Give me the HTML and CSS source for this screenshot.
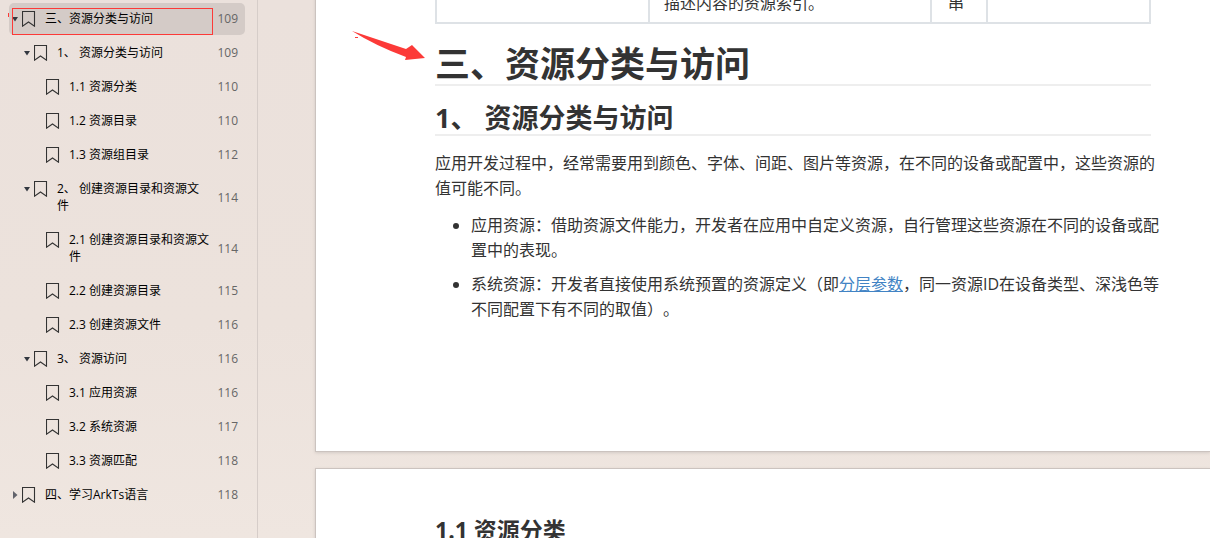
FILE: index.html
```html
<!DOCTYPE html>
<html lang="zh-CN">
<head>
  <meta charset="utf-8">
  <title>资源分类与访问</title>
  <link rel="stylesheet" href="styles.css">
</head>
<body>
  <svg class="symbols" aria-hidden="true">
    <symbol id="bookmark" viewBox="0 0 14 16"><path d="M.5 .5H12.5V15.2L6.5 11L.5 15.2Z" fill="none" stroke="#333" stroke-width="1.1"/></symbol>
    <symbol id="down" viewBox="0 0 6 6"><path d="M0 1H6L3 5.5Z" fill="#333840"/></symbol>
    <symbol id="right" viewBox="0 0 6 8"><path d="M1 0L5.5 4L1 8Z" fill="#62636b"/></symbol>
  </svg>

  <div class="wrapper">
    <nav class="sidebar">
      <ul class="outline">
        <li class="row active"><button class="toggle" aria-label="收起"><svg width="6" height="6"><use href="#down"/></svg></button><svg class="mark"><use href="#bookmark"/></svg><a href="#c3">三、资源分类与访问</a><span class="num">109</span></li>
        <li class="row level-1"><button class="toggle" aria-label="收起"><svg width="6" height="6"><use href="#down"/></svg></button><svg class="mark"><use href="#bookmark"/></svg><a href="#c3-1">1、 资源分类与访问</a><span class="num">109</span></li>
        <li class="row level-2"><svg class="mark"><use href="#bookmark"/></svg><a href="#c3-1-1">1.1 资源分类</a><span class="num">110</span></li>
        <li class="row level-2"><svg class="mark"><use href="#bookmark"/></svg><a href="#">1.2 资源目录</a><span class="num">110</span></li>
        <li class="row level-2"><svg class="mark"><use href="#bookmark"/></svg><a href="#">1.3 资源组目录</a><span class="num">112</span></li>
        <li class="row level-1"><button class="toggle" aria-label="收起"><svg width="6" height="6"><use href="#down"/></svg></button><svg class="mark"><use href="#bookmark"/></svg><a href="#">2、 创建资源目录和资源文件</a><span class="num">114</span></li>
        <li class="row level-2"><svg class="mark"><use href="#bookmark"/></svg><a href="#">2.1 创建资源目录和资源文件</a><span class="num">114</span></li>
        <li class="row level-2"><svg class="mark"><use href="#bookmark"/></svg><a href="#">2.2 创建资源目录</a><span class="num">115</span></li>
        <li class="row level-2"><svg class="mark"><use href="#bookmark"/></svg><a href="#">2.3 创建资源文件</a><span class="num">116</span></li>
        <li class="row level-1"><button class="toggle" aria-label="收起"><svg width="6" height="6"><use href="#down"/></svg></button><svg class="mark"><use href="#bookmark"/></svg><a href="#">3、 资源访问</a><span class="num">116</span></li>
        <li class="row level-2"><svg class="mark"><use href="#bookmark"/></svg><a href="#">3.1 应用资源</a><span class="num">116</span></li>
        <li class="row level-2"><svg class="mark"><use href="#bookmark"/></svg><a href="#">3.2 系统资源</a><span class="num">117</span></li>
        <li class="row level-2"><svg class="mark"><use href="#bookmark"/></svg><a href="#">3.3 资源匹配</a><span class="num">118</span></li>
        <li class="row"><button class="toggle" aria-label="展开"><svg width="6" height="8"><use href="#right"/></svg></button><svg class="mark"><use href="#bookmark"/></svg><a href="#">四、学习ArkTs语言</a><span class="num">118</span></li>
      </ul>
      <div class="note-box"></div>
      <div class="note-dot"></div>
    </nav>

    <main class="viewer">
      <article class="page page-first">
        <table class="fields">
          <tr><td class="name"></td><td class="desc">描述内容的资源索引。</td><td class="type">串</td><td class="extra"></td></tr>
        </table>
        <h1 id="c3">三、资源分类与访问</h1>
        <h2 id="c3-1">1、 资源分类与访问</h2>
        <p>应用开发过程中，经常需要用到颜色、字体、间距、图片等资源，在不同的设备或配置中，这些资源的<br>值可能不同。</p>
        <ul class="list">
          <li>应用资源：借助资源文件能力，开发者在应用中自定义资源，自行管理这些资源在不同的设备或配<br>置中的表现。</li>
          <li>系统资源：开发者直接使用系统预置的资源定义（即<a href="#">分层参数</a>，同一资源ID在设备类型、深浅色等<br>不同配置下有不同的取值）。</li>
        </ul>
        <svg class="note-arrow" width="74" height="32" viewBox="0 0 74 32" aria-hidden="true"><path d="M0 0L54 18L60 14L73 27L53 29L54 26Q24 15 0 0ZM3 6H6V7H3Z" fill="#fc3a38"/></svg>
      </article>
      <article class="page page-next">
        <h3 id="c3-1-1">1.1 资源分类</h3>
      </article>
    </main>
  </div>
</body>
</html>
```

FILE: styles.css
```css
*{ box-sizing: border-box; }
body{ margin: 0; height: 100vh; overflow: hidden; color: #333; font-family: "Open Sans", "Noto Sans CJK SC", sans-serif; text-spacing-trim: space-all; }
h1, h2, h3, p, ul{ margin: 0; padding: 0; }
.symbols{ display: none; }

.wrapper{ display: flex; height: 100%; background: linear-gradient(180deg, #ebe1dc 0%, #ece2dc 60%, #efe6e0 100%); }

/* outline */
.sidebar{ position: relative; flex: none; width: 258px; padding: 3px 12px 0 9px; border-right: 1px solid #d6cdc9; }
.outline{ list-style: none; font-size: 12px; line-height: 17px; }
.row{ display: flex; align-items: flex-start; margin-bottom: 2px; padding: 7px 7px 8px 13px; border-radius: 5px; }
.row a{ flex: 1; margin: 0 6px 0 9px; color: #000; text-decoration: none; white-space: pre-wrap; word-break: break-all; }
.row.active{ background: #d4cbc7; }
.level-1{ padding-left: 25px; }
.level-2{ padding-left: 37px; }
.level-1 a{ margin-right: 10px; }
.mark{ flex: none; width: 14px; height: 16px; margin-top: 1px; }
.toggle{ display: flex; align-items: center; width: 10px; height: 17px; margin-left: -10px; padding: 0; border: 0; background: none; }
.num{ align-self: center; color: #666; }

/* pages */
.viewer{ flex: 1; min-width: 0; padding-left: 57px; }
.page{ position: relative; padding-left: 119px; padding-right: 59px; background: #fff; border: 1px solid #cbc3bf; border-right: 0; box-shadow: 0 1px 3px #d3cac5; }
.page-first{ margin-top: -20px; padding-bottom: 120px; }
.page-next{ margin-top: 16px; padding-top: 46px; padding-bottom: 60px; }

.fields{ width: 100%; table-layout: fixed; border-collapse: collapse; font-size: 16px; line-height: 25px; }
.fields td{ height: 41px; padding: 6px 14px 5px; border: 2px solid #dee2e6; }
.fields .type{ width: 56px; padding-left: 16px; }
.desc{ width: 282px; }
.extra{ width: 163px; }

h1{ margin-top: 20px; border-bottom: 2px solid #eee; font-size: 35px; line-height: 40px; }
h2{ margin-top: 16px; border-bottom: 2px solid #eee; font-size: 27px; line-height: 32px; }
h3{ font-size: 23px; line-height: 30px; }
p{ margin-top: 15px; font-size: 16px; line-height: 25px; white-space: nowrap; }
.list{ margin-top: 12px; padding-left: 36px; font-size: 16px; line-height: 25px; white-space: nowrap; }
.list li{ margin-bottom: 9px; }
.list a{ color: #4183c4; }

/* red marks */
.note-box{ position: absolute; left: 12px; top: 8px; width: 201px; height: 27px; border: 1px solid #fc3a38; }
.note-dot{ position: absolute; left: 8px; top: 13px; width: 1px; height: 4px; background: #fc3a38; }
.note-arrow{ position: absolute; left: 36px; top: 50px; }
```
